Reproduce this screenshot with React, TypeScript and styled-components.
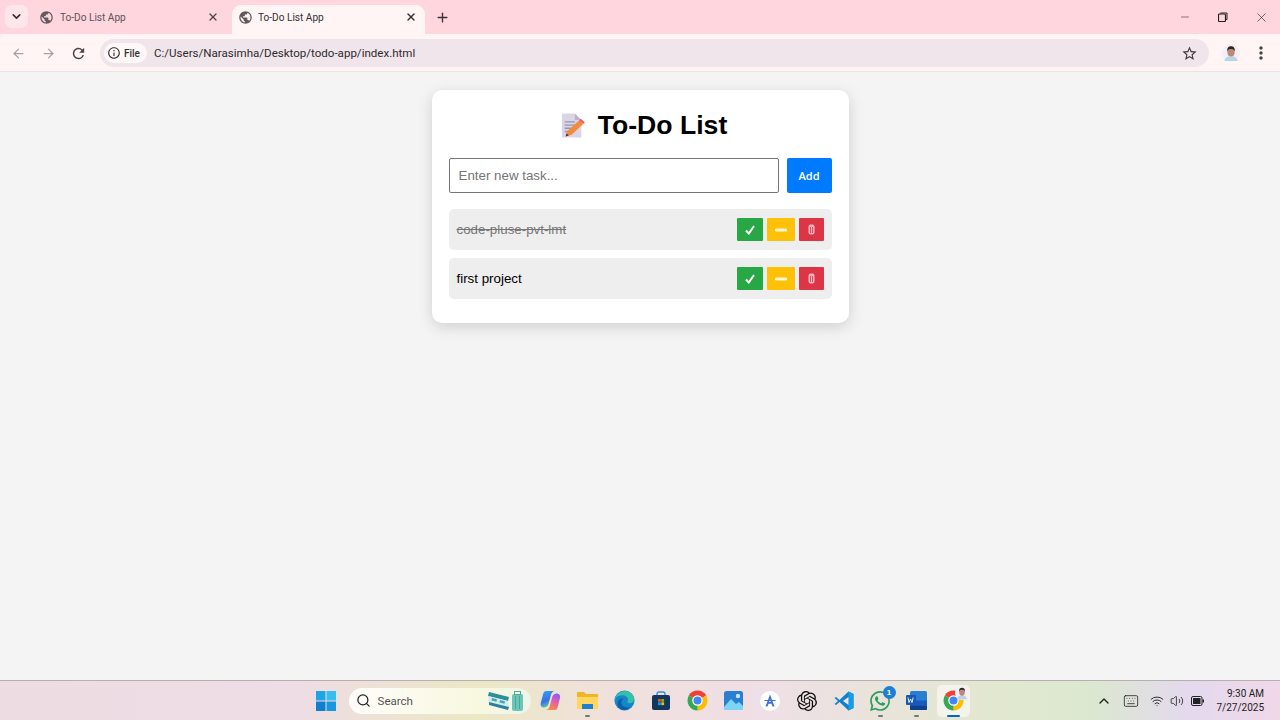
import React from "react";
import styled, { createGlobalStyle } from "styled-components";
import { ArrowLeft, ArrowRight, X, Plus, ChevronDown, ChevronUp, Minus, Search, Keyboard, Wifi, Volume2 } from "lucide-react";
import { SiOpenai, SiWhatsapp } from "react-icons/si";
import { MdPublic, MdRefresh, MdStarBorder, MdInfoOutline, MdMoreVert } from "react-icons/md";

const Global = createGlobalStyle`
  html, body { margin: 0; padding: 0; width: 1280px; height: 720px; overflow: hidden; background: #f4f4f4; }
  * { box-sizing: border-box; }
  #root { width: 1280px; height: 720px; }
`;

const Screen = styled.div`
  width: 1280px; height: 720px; display: flex; flex-direction: column;
  font-family: "Liberation Sans", Arial, sans-serif; background: #f4f4f4;
`;
const TabStrip = styled.div`
  height: 34px; background: #ffd5de; display: flex; align-items: flex-end; padding-left: 5px; flex-shrink: 0;
`;
const TabMenu = styled.div`
  width: 23px; height: 23px; margin-bottom: 6px; border-radius: 7px; background: #ffe6eb; color: #333;
  display: flex; align-items: center; justify-content: center;
`;
const Tab = styled.div<{ $active?: boolean }>`
  position: relative; width: ${p => (p.$active ? "193px" : "198px")}; height: 29px; margin-left: ${p => (p.$active ? "0" : "6px")};
  display: flex; align-items: center; padding: 0 ${p => (p.$active ? "8px" : "13px")} 5px ${p => (p.$active ? "6px" : "5px")}; gap: ${p => (p.$active ? "5px" : "6px")};
  border-radius: 9px 9px 0 0; background: ${p => (p.$active ? "#fff5f5" : "transparent")};
  color: ${p => (p.$active ? "#333" : "#5e5358")};
  font: 400 10.1px Roboto, "Noto Sans", sans-serif;
`;
const TabTitle = styled.span`flex: 1; white-space: nowrap;`;
const NewTab = styled.div`
  width: 28px; height: 28px; margin: 0 0 3px 3px; display: flex; align-items: center; justify-content: center; color: #3c3438;
`;
const WindowControls = styled.div`
  margin-left: auto; align-self: stretch; display: flex; align-items: center; color: #333;
`;
const WinButton = styled.div`
  width: 38px; height: 34px; display: flex; align-items: center; justify-content: center;
`;
const Toolbar = styled.div`
  height: 38px; background: #fff5f5; border-bottom: 1px solid #f3dfe2; display: flex; align-items: center;
  padding: 1px 6px 0 0; flex-shrink: 0; border-top-left-radius: 7px;
`;
const NavButton = styled.div<{ $off?: boolean }>`
  width: 30px; height: 28px; display: flex; align-items: center; justify-content: center;
  color: ${p => (p.$off ? "#a9a2a5" : "#4a4346")};
`;
const NavGroup = styled.div`display: flex; padding-left: 3px; margin-right: 7px;`;
const Omnibox = styled.div`
  width: 1109px; height: 28px; border-radius: 14px; background: #f1e5ec; display: flex; align-items: center;
  padding: 0 11px 0 4px; font: 400 11.55px Roboto, "Noto Sans", sans-serif; color: #2d2a2c;
`;
const FileChip = styled.div`
  width: 43px; height: 20px; border-radius: 10px; background: #fff7f8; display: flex; align-items: center;
  padding-left: 3px; gap: 3px; font-size: 10px; font-weight: 500; color: #333; margin-right: 7px;
`;
const Url = styled.span`flex: 1; white-space: nowrap;`;
const ToolEnd = styled.div`display: flex; align-items: center; margin-left: 13px; gap: 11px; color: #444;`;
const Page = styled.main`
  flex: 1; background: #f4f4f4; display: flex; justify-content: center; align-items: flex-start; padding-top: 18px;
`;
const Card = styled.section`
  width: 417px; height: 233px; background: #fff; border-radius: 10px; padding: 17px;
  box-shadow: 0 4px 15px rgba(0,0,0,.15);
`;
const TitleRow = styled.h1`
  margin: 0 0 15px; height: 36px; display: flex; align-items: center; justify-content: center; gap: 13px;
  font: 700 26.6px "Liberation Sans", Arial, sans-serif; color: #000; padding-left: 8px;
`;
const Form = styled.div`display: flex; gap: 8px; margin-bottom: 16px;`;
const TaskInput = styled.input`
  width: 330px; height: 35px; padding: 0 0 1px 9px; border: 1px solid #767676; border-radius: 2px;
  font: 400 13.33px "Liberation Sans", Arial, sans-serif; background: #fff; outline: none;
  &::placeholder { color: #757575; }
`;
const AddButton = styled.button`
  width: 45px; height: 35px; border: 0; padding: 0 0 1px; background: #007bff; color: #fff; border-radius: 2px;
  font: 600 11px "Open Sans", "Liberation Sans", sans-serif;
`;
const TaskList = styled.ul`list-style: none; margin: 0; padding: 0; display: flex; flex-direction: column; gap: 8px;`;
const TaskRow = styled.li`
  height: 41px; background: #eeeeee; border-radius: 5px; display: flex; align-items: center; padding: 0 8px; gap: 4px;
`;
const TaskText = styled.span<{ $done?: boolean }>`
  flex: 1; font-size: 13.33px; padding-bottom: 1px; color: ${p => (p.$done ? "#777" : "#000")};
  text-decoration: ${p => (p.$done ? "line-through" : "none")};
`;
const ActionButton = styled.button<{ $bg: string; $w: number }>`
  width: ${p => p.$w}px; height: 23px; border: 0; padding: 0; background: ${p => p.$bg}; color: #fff; border-radius: 1px;
  display: flex; align-items: center; justify-content: center; font-size: 13px;
`;
const Taskbar = styled.footer`
  height: 40px; flex-shrink: 0; display: flex; align-items: center; padding-left: 308px; position: relative;
  border-top: 1px solid #b9afb0;
  background: linear-gradient(90deg, #eedce3 0, #eedde4 300px, #ebe8c4 480px, #f0e0dc 610px, #efdfe6 760px, #e2e8d0 1000px, #dbe8cf 1090px, #e4d9ee 1190px, #f0d8e8 1280px);
`;
const TaskIcon = styled.div<{ $active?: boolean; $dot?: boolean }>`
  position: relative; width: 36.6px; height: 32px; display: flex; align-items: center; justify-content: center;
  border-radius: 6px; border: 0 solid transparent; border-width: 0 2.3px; background-clip: padding-box;
  background-color: ${p => (p.$active ? "rgba(255,255,255,.55)" : "transparent")};
  &::after {
    content: ${p => (p.$dot || p.$active ? '""' : "none")}; position: absolute; bottom: 0; left: 50%;
    width: ${p => (p.$active ? "13px" : "5px")}; height: 2px; margin-left: ${p => (p.$active ? "-6.5px" : "-2.5px")};
    border-radius: 1px; background: ${p => (p.$active ? "#0067c0" : "#777")};
  }
`;
const SearchBox = styled.div`
  width: 182px; height: 26px; margin: 0 2px 0 4px; border-radius: 13px; background: linear-gradient(90deg,#fffdfb,#f8f8df 70%,#eef5e8);
  display: flex; align-items: center; padding: 0 8px 0 7px; gap: 7px; font: 400 11.5px Roboto, "Noto Sans", sans-serif; color: #555; flex-shrink: 0;
`;
const SearchLabel = styled.span`flex: 1;`;
const Badge = styled.span`
  position: absolute; top: 1px; right: 1px; width: 13px; height: 13px; border-radius: 50%; background: #1d7fd4; color: #fff;
  font: 700 8px "Liberation Sans", sans-serif; display: flex; align-items: center; justify-content: center;
`;
const Tray = styled.div`margin-left: auto; display: flex; align-items: center; color: #222; padding-right: 16px;`;
const TrayItem = styled.div<{ $w: number }>`width: ${p => p.$w}px; display: flex; justify-content: center; align-items: center;`;
const Clock = styled.div`
  width: 52px; margin-left: 5px; text-align: right; font: 400 10px/14px Roboto, "Noto Sans", sans-serif; color: #222;
`;
const AvatarOverlay = styled.div`position: absolute; right: 1px; top: 1px; display: flex;`;

const ChromeLogo = ({ size = 21 }: { size?: number }) => (
  <svg width={size} height={size} viewBox="3 3 42 42">
    <path d="M24 24L6.680 14A20 20 0 0 1 41.320 14z" fill="#ea4335" />
    <path d="M24 24L41.320 14A20 20 0 0 1 24 44z" fill="#fbbc04" />
    <path d="M24 24L24 44A20 20 0 0 1 6.680 14z" fill="#34a853" />
    <circle cx="24" cy="24" r="10.500" fill="#fff" /><circle cx="24" cy="24" r="8" fill="#4285f4" />
  </svg>
);
const Avatar = ({ size }: { size: number }) => (
  <svg width={size} height={size} viewBox="0 0 20 20">
    <circle cx="10" cy="10" r="10" fill="#f6eef2" />
    <path d="M2.500 19c1-4.500 4-5.500 7.500-5.500s6.500 1 7.500 5.500z" fill="#b7d5ea" />
    <ellipse cx="10" cy="9" rx="4" ry="5" fill="#b98a77" />
    <path d="M5.800 8c-.4-4 2-5.500 4.200-5.500S14.700 4 14.200 8c-1-2-2-2.500-4.200-2.500S6.800 6 5.800 8z" fill="#2c2624" />
  </svg>
);
const Memo = () => (
  <svg width="24" height="27" viewBox="0 0 26 28">
    <path d="M1 1h14l7 7v19H1z" fill="#d9d5e8" />
    <path d="M15 1l7 7h-7z" fill="#b9b3cc" />
    <path d="M4 10h11M4 13.500h13M4 17h9M4 20.500h6" stroke="#9a95ab" strokeWidth="1.400" />
    <path d="M5 26l2-6L19.500 8.500l4.500 4L11.500 24z" fill="#f28b3c" />
    <path d="M19.500 8.500l2-1.800 4.300 4-1.800 1.800z" fill="#ef5a5a" />
    <path d="M5 26l1-3.500 2.500 2.200z" fill="#4a3a3a" />
  </svg>
);
const Trash = () => (
  <svg width="7" height="11" viewBox="0 0 7 11"><rect x=".5" y=".5" width="6" height="10" rx="2" fill="#f3b5bd" /><path d="M2.500 3v6M4.500 3v6" stroke="#dc3545" strokeWidth=".8" /></svg>
);
const WinLogo = () => (
  <svg width="20" height="20" viewBox="0 0 20 20">
    <rect width="9.500" height="9.500" fill="#1fa5e6" /><rect x="10.500" width="9.500" height="9.500" fill="#37bdf0" />
    <rect y="10.500" width="9.500" height="9.500" fill="#0f7fd1" /><rect x="10.500" y="10.500" width="9.500" height="9.500" fill="#1b96e0" />
  </svg>
);
const Copilot = () => (
  <svg width="21" height="21" viewBox="0 0 21 21">
    <defs>
      <linearGradient id="cpA" x1="0" y1="0" x2="0.3" y2="1"><stop offset="0" stopColor="#2aa7ef" /><stop offset=".65" stopColor="#3a6fe6" /><stop offset="1" stopColor="#56c8a0" /></linearGradient>
      <linearGradient id="cpB" x1="0.7" y1="0" x2="0.3" y2="1"><stop offset="0" stopColor="#8a5cf0" /><stop offset=".45" stopColor="#e55ab0" /><stop offset="1" stopColor="#f5913a" /></linearGradient>
    </defs>
    <path d="M6 1h8.500c-2 .5-3 2-3.500 3.800L8.500 14c-.6 2.200-2.300 3.600-4.500 3.600C1.400 17.600.2 15.400.8 13L3 4.300C3.500 2.300 4.500 1 6 1z" fill="url(#cpA)" />
    <path d="M14.500 20H6c2-.5 3.200-2 3.700-3.800L12.200 7c.6-2.200 2.300-3.600 4.500-3.600 2.700 0 3.900 2.200 3.300 4.600l-2.200 8.700c-.5 2-1.300 3.300-2.800 3.300z" fill="url(#cpB)" />
  </svg>
);
const Folder = () => (
  <svg width="21" height="19" viewBox="0 0 21 19">
    <path d="M0 2a1 1 0 0 1 1-1h6l2 2h11a1 1 0 0 1 1 1v13a1 1 0 0 1-1 1H1a1 1 0 0 1-1-1z" fill="#f0b429" />
    <path d="M0 6h21v11a1 1 0 0 1-1 1H1a1 1 0 0 1-1-1z" fill="#ffd75e" />
    <rect x="5" y="13" width="11" height="5" fill="#1f7fd1" />
  </svg>
);
const Edge = () => (
  <svg width="21" height="21" viewBox="0 0 24 24">
    <circle cx="12" cy="12" r="11.500" fill="#1587c9" />
    <path d="M1 11C2 5 7 1 12 1c6 0 11 4 11 9.500 0 3-2.500 4.500-5 4.500-2 0-3.500-1-3-1.500 1-1 1.500-2 1-3.500C15 7 12 5.500 9 6 5 6.500 2 8 1 11z" fill="#35c1a5" />
    <path d="M8 22c-4-2-5-7-3-10 1.500-2 4-3 6-2-2 1-3 3-2.500 5.500.5 3 4 5 8 4.500 1 0 2-.5 2.500-1-2 3-7 5-11 3z" fill="#0b5ea8" />
  </svg>
);
const Store = () => (
  <svg width="20" height="20" viewBox="0 0 20 20">
    <path d="M6 5V3a2 2 0 0 1 2-2h4a2 2 0 0 1 2 2v2" fill="none" stroke="#2f8fd8" strokeWidth="1.400" />
    <rect x="1" y="4" width="18" height="15" rx="2" fill="#13365f" />
    <rect x="7" y="8" width="2.800" height="2.800" fill="#f25022" /><rect x="10.300" y="8" width="2.800" height="2.800" fill="#7fba00" />
    <rect x="7" y="11.300" width="2.800" height="2.800" fill="#00a4ef" /><rect x="10.300" y="11.300" width="2.800" height="2.800" fill="#ffb900" />
  </svg>
);
const Photos = () => (
  <svg width="19" height="19" viewBox="0 0 19 19">
    <rect width="19" height="19" rx="2.500" fill="#2b7fd0" />
    <path d="M0 16l7-8 5 5 3-2 4 4v2.500A1.500 1.500 0 0 1 17.500 19h-16A1.500 1.500 0 0 1 0 17.500z" fill="#7fd3f5" />
    <circle cx="14" cy="5" r="2.200" fill="#bfe8fb" />
  </svg>
);
const AppA = () => (
  <svg width="20" height="20" viewBox="0 0 20 20">
    <circle cx="10" cy="10" r="10" fill="#fff" />
    <path d="M10 3.500L5.500 15.500h2l1-2.800h3l1 2.800h2zM9.100 11L10 8l.9 3z" fill="#3f70d6" />
    <path d="M4.500 9.500h11" stroke="#3f70d6" strokeWidth="1" />
  </svg>
);
const VsCode = () => (
  <svg width="20" height="20" viewBox="0 0 20 20">
    <path d="M14.500 .5L19.500 3v14l-5 2.500L5.500 11l-3.500 3L.5 13 4 10 .5 7 2 6l3.500 3z" fill="#0f7fd0" />
    <path d="M14.500 .5L19.500 3v14l-5 2.500z" fill="#1a9be6" />
    <path d="M14.500 6v8L9 10z" fill="#f1e4e6" />
  </svg>
);
const Word = () => (
  <svg width="21" height="19" viewBox="0 0 21 19">
    <rect x="4" width="17" height="19" rx="1.500" fill="#2b7cd3" />
    <rect x="4" y="9.500" width="17" height="5" fill="#185abd" /><rect x="4" y="14.500" width="17" height="4.500" rx="1" fill="#103f91" />
    <rect x="0" y="4" width="10" height="10" rx="1" fill="#1558b8" />
    <path d="M2 6.500l1 5 1.500-3.500L6 11.500l1.200-5" fill="none" stroke="#fff" strokeWidth=".9" />
  </svg>
);
const Tickets = () => (
  <svg width="35" height="20" viewBox="0 0 35 20">
    <path d="M1 1l20 5-1 4L0 5z" fill="#2a8f98" />
    <path d="M0 5l20 5 1 6L1 11z" fill="#cdeef0" />
    <path d="M4 7l5 1.300-.5 2.500-5-1.300zM12 9l5 1.300-.5 2.500-5-1.300z" fill="#4aa6ad" />
    <path d="M1 11l20 5-1 3L1 14z" fill="#2f7f9c" />
    <rect x="24" y="3" width="11" height="17" rx="2" fill="#6cc6b8" />
    <rect x="26.500" y=".5" width="6" height="3" fill="none" stroke="#4fa89b" strokeWidth="1" />
    <path d="M27.500 5v13M31.500 5v13" stroke="#48a496" strokeWidth=".9" />
  </svg>
);
const Battery = () => (
  <svg width="13" height="10" viewBox="0 0 13 10"><rect x=".5" y=".5" width="10.500" height="9" rx="1.500" fill="none" stroke="#222" /><rect x="2" y="2" width="7.500" height="6" fill="#222" /><rect x="11.500" y="3.500" width="1.500" height="3" fill="#222" /></svg>
);

const tasks = [
  { text: "code-pluse-pvt-lmt", done: true },
  { text: "first project", done: false },
];

export default function App() {
  return (
    <Screen>
      <Global />
      <TabStrip>
        <TabMenu><ChevronDown size={13} strokeWidth={3} /></TabMenu>
        <Tab>
          <MdPublic size={15} color="#5f5a5d" />
          <TabTitle>To-Do List App</TabTitle>
          <X size={12} strokeWidth={2.4} color="#4b4347" />
        </Tab>
        <Tab $active>
          <MdPublic size={15} color="#5f5a5d" />
          <TabTitle>To-Do List App</TabTitle>
          <X size={12} strokeWidth={2.8} color="#333" />
        </Tab>
        <NewTab><Plus size={15} strokeWidth={2.2} /></NewTab>
        <WindowControls>
          <WinButton><Minus size={12} strokeWidth={1.2} /></WinButton>
          <WinButton><svg width="10" height="10" viewBox="0 0 10 10"><path d="M2.500 1.500V1h6.500v6.500h-1" fill="none" stroke="#222" /><rect x=".5" y="2" width="7" height="7.500" rx="1" fill="none" stroke="#222" strokeWidth="1.200" /></svg></WinButton>
          <WinButton><X size={15} strokeWidth={1.1} /></WinButton>
        </WindowControls>
      </TabStrip>
      <Toolbar>
        <NavGroup>
          <NavButton $off><ArrowLeft size={15} /></NavButton>
          <NavButton $off><ArrowRight size={15} /></NavButton>
          <NavButton><MdRefresh size={17} /></NavButton>
        </NavGroup>
        <Omnibox>
          <FileChip><MdInfoOutline size={14} />File</FileChip>
          <Url>C:/Users/Narasimha/Desktop/todo-app/index.html</Url>
          <MdStarBorder size={17} color="#403a3d" />
        </Omnibox>
        <ToolEnd>
          <Avatar size={18} />
          <MdMoreVert size={20} />
        </ToolEnd>
      </Toolbar>
      <Page>
        <Card>
          <TitleRow><Memo />To-Do List</TitleRow>
          <Form>
            <TaskInput placeholder="Enter new task..." />
            <AddButton>Add</AddButton>
          </Form>
          <TaskList>
            {tasks.map(t => (
              <TaskRow key={t.text}>
                <TaskText $done={t.done}>{t.text}</TaskText>
                <ActionButton $bg="#28a745" $w={26}><svg width="10" height="10" viewBox="0 0 10 10"><path d="M1 5.500l2.800 3L9 1" fill="none" stroke="#fff" strokeWidth="2" /></svg></ActionButton>
                <ActionButton $bg="#ffc107" $w={28}><svg width="12" height="4" viewBox="0 0 12 4"><rect y=".5" width="12" height="3" rx="1.300" fill="#fff6d8" /></svg></ActionButton>
                <ActionButton $bg="#dc3545" $w={25}><Trash /></ActionButton>
              </TaskRow>
            ))}
          </TaskList>
        </Card>
      </Page>
      <Taskbar>
        <TaskIcon><WinLogo /></TaskIcon>
        <SearchBox><Search size={15} strokeWidth={2} color="#222" /><SearchLabel>Search</SearchLabel><Tickets /></SearchBox>
        <TaskIcon><Copilot /></TaskIcon>
        <TaskIcon $dot><Folder /></TaskIcon>
        <TaskIcon><Edge /></TaskIcon>
        <TaskIcon><Store /></TaskIcon>
        <TaskIcon><ChromeLogo /></TaskIcon>
        <TaskIcon><Photos /></TaskIcon>
        <TaskIcon><AppA /></TaskIcon>
        <TaskIcon><SiOpenai size={20} color="#111" /></TaskIcon>
        <TaskIcon><VsCode /></TaskIcon>
        <TaskIcon $dot><SiWhatsapp size={20} color="#2a9d5c" /><Badge>1</Badge></TaskIcon>
        <TaskIcon $dot><Word /></TaskIcon>
        <TaskIcon $active><ChromeLogo /><AvatarOverlay><Avatar size={14} /></AvatarOverlay></TaskIcon>
        <Tray>
          <TrayItem $w={20}><ChevronUp size={16} strokeWidth={2} /></TrayItem>
          <TrayItem $w={33}><Keyboard size={16} strokeWidth={1.2} /></TrayItem>
          <TrayItem $w={20}><Wifi size={14} strokeWidth={1.6} /></TrayItem>
          <TrayItem $w={20}><Volume2 size={14} strokeWidth={1.4} /></TrayItem>
          <TrayItem $w={20}><Battery /></TrayItem>
          <Clock>9:30 AM<br />7/27/2025</Clock>
        </Tray>
      </Taskbar>
    </Screen>
  );
}
